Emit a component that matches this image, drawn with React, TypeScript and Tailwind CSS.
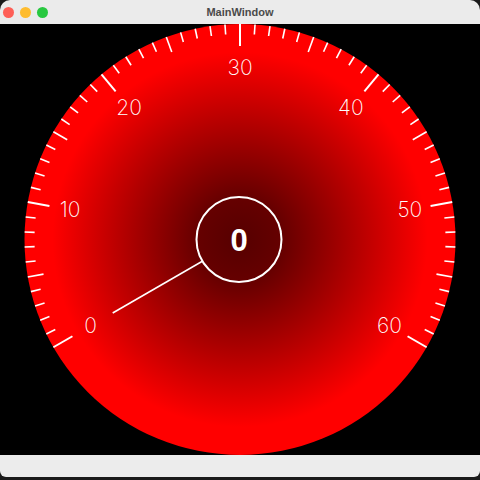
import React from "react";

const CX = 240;
const CY = 215.5;
const R = 215.5;

function polar(r: number, deg: number) {
  const a = (deg * Math.PI) / 180;
  return { x: CX + r * Math.sin(a), y: CY - r * Math.cos(a) };
}

function valueAngle(v: number) {
  return -120 + v * 4;
}

function Gauge({ value }: { value: number }) {
  const ticks = Array.from({ length: 61 }, (_, i) => i);
  const labels = [0, 10, 20, 30, 40, 50, 60];
  const needleA = valueAngle(value);
  const n1 = polar(43, needleA);
  const n2 = polar(147, needleA);
  return (
    <svg viewBox="0 0 480 431" width={480} height={431} className="block">
      <defs>
        <radialGradient id="dial" cx={CX} cy={CY} r={R} gradientUnits="userSpaceOnUse">
          <stop offset="0" stopColor="#560000" />
          <stop offset="0.2" stopColor="#660000" />
          <stop offset="0.87" stopColor="#ff0000" />
          <stop offset="1" stopColor="#ff0000" />
        </radialGradient>
      </defs>
      <circle cx={CX} cy={CY} r={R} fill="url(#dial)" />
      {ticks.map((t) => {
        const major = t % 10 === 0;
        const mid = t % 5 === 0;
        const len = major ? 22 : mid ? 16 : 10;
        const a = valueAngle(t);
        const p1 = polar(R, a);
        const p2 = polar(R - len, a);
        return (
          <line
            key={t}
            x1={p1.x}
            y1={p1.y}
            x2={p2.x}
            y2={p2.y}
            stroke="#ffffff"
            strokeWidth={major ? 2 : 1.6}
          />
        );
      })}
      {labels.map((v) => {
        const p = polar(172.5, valueAngle(v));
        return (
          <text
            key={v}
            x={p.x}
            y={p.y}
            textAnchor="middle"
            dominantBaseline="central"
            fill="#ffffff"
            fontSize={21}
            fontWeight={200}
            fontFamily="Inter, 'Open Sans', sans-serif"
          >
            {v}
          </text>
        );
      })}
      <line x1={n1.x} y1={n1.y} x2={n2.x} y2={n2.y} stroke="#ffffff" strokeWidth={1.6} />
      <circle cx={239} cy={CY} r={42.5} fill="none" stroke="#ffffff" strokeWidth={2} />
      <text
        x={239}
        y={CY + 1}
        textAnchor="middle"
        dominantBaseline="central"
        fill="#ffffff"
        fontSize={31}
        fontWeight={700}
        fontFamily="'Liberation Sans', Arial, sans-serif"
      >
        {value}
      </text>
    </svg>
  );
}

export default function App() {
  return (
    <div className="w-[480px] h-[480px] bg-[#1a1a1a] overflow-hidden">
      <div className="flex flex-col h-[477px] rounded-t-[10px] rounded-b-[6px] overflow-hidden bg-black">
        <div className="relative h-[24px] shrink-0 bg-[#ebebeb] flex items-center justify-center">
          <div className="absolute left-[3px] top-[7px] flex gap-[6px]">
            <span className="w-[11px] h-[11px] rounded-full bg-[#fe5f57]" />
            <span className="w-[11px] h-[11px] rounded-full bg-[#febc2e]" />
            <span className="w-[11px] h-[11px] rounded-full bg-[#28c840]" />
          </div>
          <span className="text-[11px] font-bold text-[#4a4a4a] font-['Liberation_Sans',Arial,sans-serif]">
            MainWindow
          </span>
        </div>
        <div className="h-[431px] shrink-0 bg-black">
          <Gauge value={0} />
        </div>
        <div className="flex-1 bg-[#ececec]" />
      </div>
    </div>
  );
}
